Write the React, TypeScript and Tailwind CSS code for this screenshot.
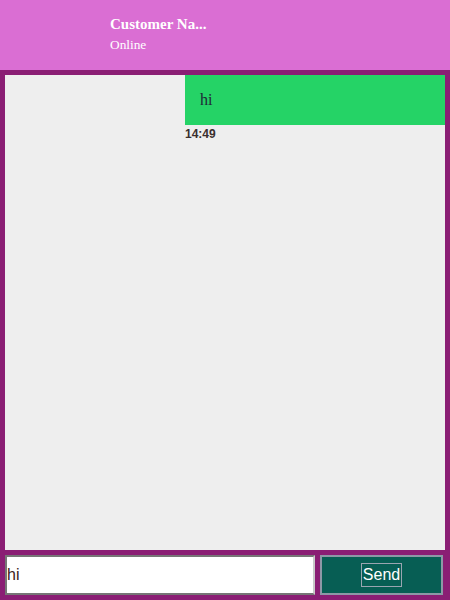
import { useState } from "react";

export default function App() {
  const [text, setText] = useState("hi");

  return (
    <div className="w-[450px] h-[600px] flex flex-col bg-[#8a1e74] overflow-hidden">
      <div className="h-[70px] shrink-0 bg-[#da6ed3] pl-[110px] pt-[15px] text-white font-['Liberation_Serif',serif]">
        <div className="text-[15px] font-bold leading-[18px]">Customer Na...</div>
        <div className="text-[13.33px] leading-[16px] mt-[4px]">Online</div>
      </div>

      <div className="flex-1 flex flex-col p-[5px] gap-[5px] min-h-0">
        <div className="flex-1 bg-[#eeeeee] flex flex-col items-end">
          <div className="w-[260px]">
            <div className="h-[50px] bg-[#25d366] pl-[15px] flex items-center text-[16px] text-[#1f2937] font-['Liberation_Serif',serif]">
              hi
            </div>
            <div className="text-[12px] font-bold leading-[18px] text-[#3a2f2f] font-['Liberation_Sans',sans-serif]">
              14:49
            </div>
          </div>
        </div>

        <div className="h-[40px] shrink-0 flex gap-[5px]">
          <input
            value={text}
            onChange={(e) => setText(e.target.value)}
            className="w-[310px] h-full bg-white border-2 border-t-[#767676] border-l-[#767676] border-r-[#c9c9c9] border-b-[#767676] pl-0 pr-[1px] text-[16px] text-[#3a2020] font-['Liberation_Sans',sans-serif] outline-none"
          />
          <button className="w-[123px] h-full bg-[#075e54] border-2 border-[#8d98a6] flex items-center justify-center">
            <span className="border border-[#9aa5b1] px-[1px] text-[16px] leading-[22px] text-white font-['Liberation_Sans',sans-serif]">
              Send
            </span>
          </button>
        </div>
      </div>
    </div>
  );
}
